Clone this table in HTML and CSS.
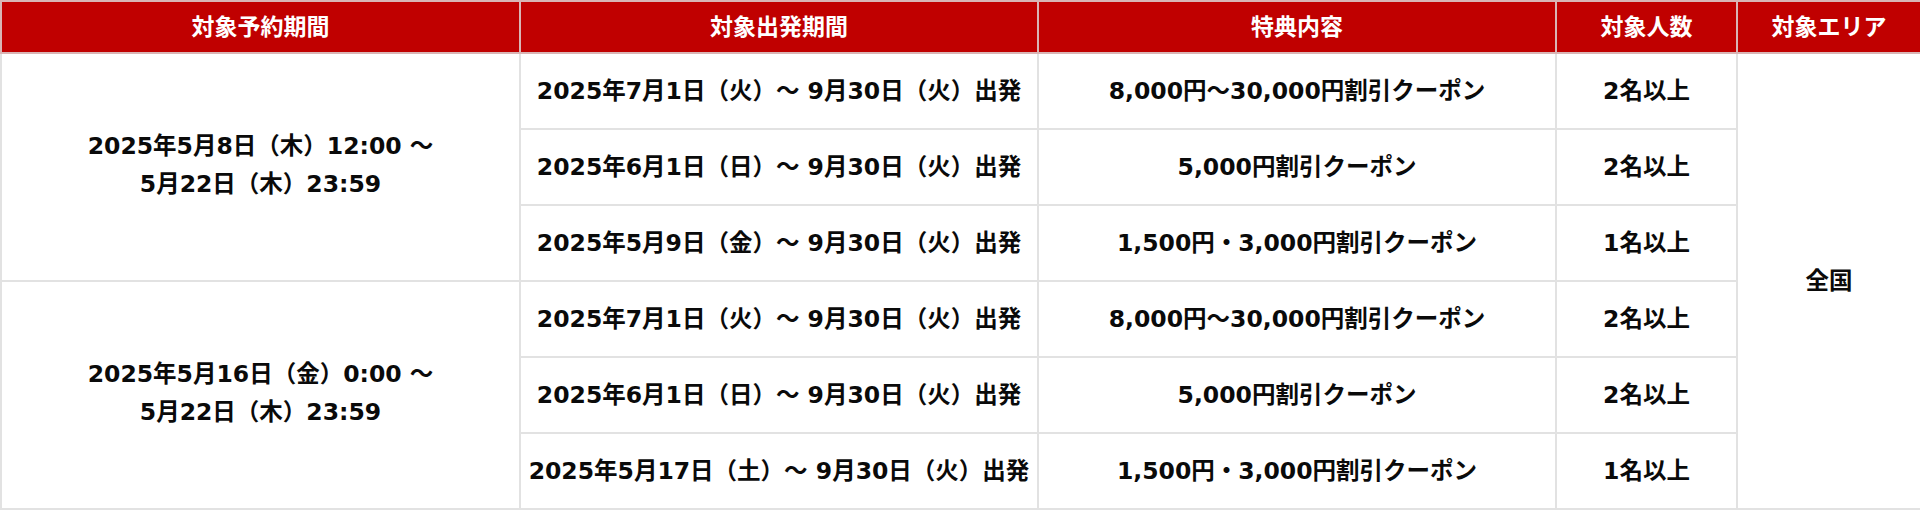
FILE: index.html
```html
<!DOCTYPE html>
<html lang="ja">
<head>
<meta charset="utf-8">
<title>キャンペーン対象</title>
<link rel="stylesheet" href="styles.css">
</head>
<body>
<table class="campaign">
  <colgroup>
    <col class="c-book">
    <col class="c-depart">
    <col class="c-benefit">
    <col class="c-people">
    <col class="c-area">
  </colgroup>
  <thead>
    <tr>
      <th>対象予約期間</th>
      <th>対象出発期間</th>
      <th>特典内容</th>
      <th>対象人数</th>
      <th>対象エリア</th>
    </tr>
  </thead>
  <tbody>
    <tr>
      <td rowspan="3" class="period">2025年5月8日（木）12:00 ～<br>5月22日（木）23:59</td>
      <td>2025年7月1日（火）～ 9月30日（火）出発</td>
      <td>8,000円～30,000円割引クーポン</td>
      <td>2名以上</td>
      <td rowspan="6">全国</td>
    </tr>
    <tr>
      <td>2025年6月1日（日）～ 9月30日（火）出発</td>
      <td>5,000円割引クーポン</td>
      <td>2名以上</td>
    </tr>
    <tr>
      <td>2025年5月9日（金）～ 9月30日（火）出発</td>
      <td>1,500円・3,000円割引クーポン</td>
      <td>1名以上</td>
    </tr>
    <tr>
      <td rowspan="3" class="period">2025年5月16日（金）0:00 ～<br>5月22日（木）23:59</td>
      <td>2025年7月1日（火）～ 9月30日（火）出発</td>
      <td>8,000円～30,000円割引クーポン</td>
      <td>2名以上</td>
    </tr>
    <tr>
      <td>2025年6月1日（日）～ 9月30日（火）出発</td>
      <td>5,000円割引クーポン</td>
      <td>2名以上</td>
    </tr>
    <tr>
      <td>2025年5月17日（土）～ 9月30日（火）出発</td>
      <td>1,500円・3,000円割引クーポン</td>
      <td>1名以上</td>
    </tr>
  </tbody>
</table>
</body>
</html>
```

FILE: styles.css
```css
html, body {
  margin: 0;
  padding: 0;
  background: #fff;
}
.campaign {
  width: 1920px;
  border-collapse: collapse;
  table-layout: fixed;
  font-family: "DejaVu Sans", "Noto Sans CJK JP", sans-serif;
  font-size: 23.5px;
  font-weight: 700;
  color: #0a0a0a;
}
.c-book { width: 519px; }
.c-depart { width: 518px; }
.c-benefit { width: 518px; }
.c-people { width: 181px; }
.c-area { width: 184px; }
.campaign th,
.campaign td {
  border: 2px solid #e2e2e2;
  text-align: center;
  vertical-align: middle;
  padding: 0 0 5px;
  white-space: nowrap;
}
.campaign thead tr {
  height: 52px;
}
.campaign tbody tr {
  height: 76px;
}
.campaign th {
  background: #c00000;
  color: #fff;
  font-size: 23px;
  border-color: #d9b5b5;
}
.campaign td.period {
  line-height: 38px;
}
```
